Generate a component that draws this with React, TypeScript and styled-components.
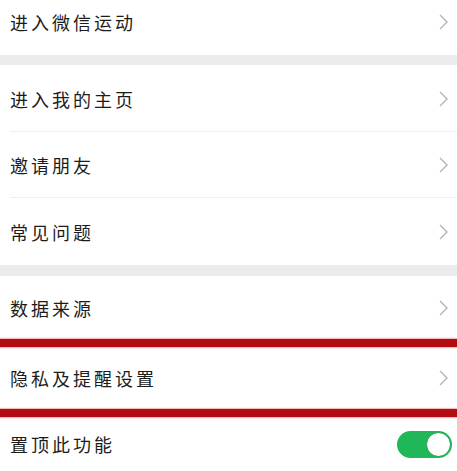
import React, { useState } from 'react';
import styled, { createGlobalStyle } from 'styled-components';

const GlobalStyle = createGlobalStyle`
  html, body {
    margin: 0;
    padding: 0;
    background: #ffffff;
    overflow: hidden;
  }
  body {
    font-family: "Noto Sans CJK SC", "Noto Sans", sans-serif;
  }
`;

const Page = styled.div`
  width: 457px;
  height: 471px;
  overflow: hidden;
  background: #ffffff;
`;

const List = styled.div`
  margin-top: -11px;
  display: flex;
  flex-direction: column;
`;

const Group = styled.section`
  display: flex;
  flex-direction: column;
  background: #ffffff;
`;

const Gap = styled.div<{ $h: number }>`
  height: ${(p) => p.$h}px;
  background: #ececec;
`;

const Row = styled.div<{ $h?: number; $line?: boolean }>`
  height: ${(p) => p.$h ?? 66}px;
  display: flex;
  align-items: center;
  justify-content: space-between;
  padding: 0 9px 0 10px;
  box-sizing: border-box;
  position: relative;
  &::after {
    content: '';
    display: ${(p) => (p.$line ? 'block' : 'none')};
    position: absolute;
    left: 10px;
    right: 0;
    bottom: 0;
    height: 1px;
    background: #efefef;
  }
`;

const Label = styled.span`
  font-size: 18px;
  letter-spacing: 3px;
  color: #1c1c1c;
  line-height: 1;
`;

const Mark = styled.div`
  height: 8px;
  background: #b30c12;
  box-shadow: 0 0 1px 1px rgba(230, 120, 120, 0.5);
`;

const Switch = styled.button<{ $on: boolean }>`
  width: 55px;
  height: 27px;
  margin-right: -4px;
  border-radius: 14px;
  border: none;
  padding: 0;
  background: ${(p) => (p.$on ? '#1fb757' : '#e5e5e5')};
  position: relative;
  cursor: pointer;
  span {
    position: absolute;
    top: 1px;
    left: ${(p) => (p.$on ? '29px' : '1px')};
    width: 25px;
    height: 25px;
    box-sizing: border-box;
    border-radius: 50%;
    background: #ffffff;
    border: 1px solid #17a24c;
  }
`;

const Chevron = () => (
  <svg width="9" height="16" viewBox="0 0 9 16" fill="none">
    <path d="M1 1l7 7-7 7" stroke="#b4b4b4" strokeWidth="1.4" />
  </svg>
);

const App = () => {
  const [pinned, setPinned] = useState(true);
  return (
    <Page>
      <GlobalStyle />
      <List>
        <Group>
          <Row>
            <Label>进入微信运动</Label>
            <Chevron />
          </Row>
        </Group>
        <Gap $h={10} />
        <Group>
          <Row $line $h={67}>
            <Label>进入我的主页</Label>
            <Chevron />
          </Row>
          <Row $line>
            <Label>邀请朋友</Label>
            <Chevron />
          </Row>
          <Row $h={67}>
            <Label>常见问题</Label>
            <Chevron />
          </Row>
        </Group>
        <Gap $h={11} />
        <Group>
          <Row $h={63}>
            <Label>数据来源</Label>
            <Chevron />
          </Row>
          <Mark />
          <Row $h={62}>
            <Label>隐私及提醒设置</Label>
            <Chevron />
          </Row>
          <Mark />
          <Row $h={54}>
            <Label>置顶此功能</Label>
            <Switch $on={pinned} onClick={() => setPinned(!pinned)}>
              <span />
            </Switch>
          </Row>
        </Group>
      </List>
    </Page>
  );
};

export default App;
